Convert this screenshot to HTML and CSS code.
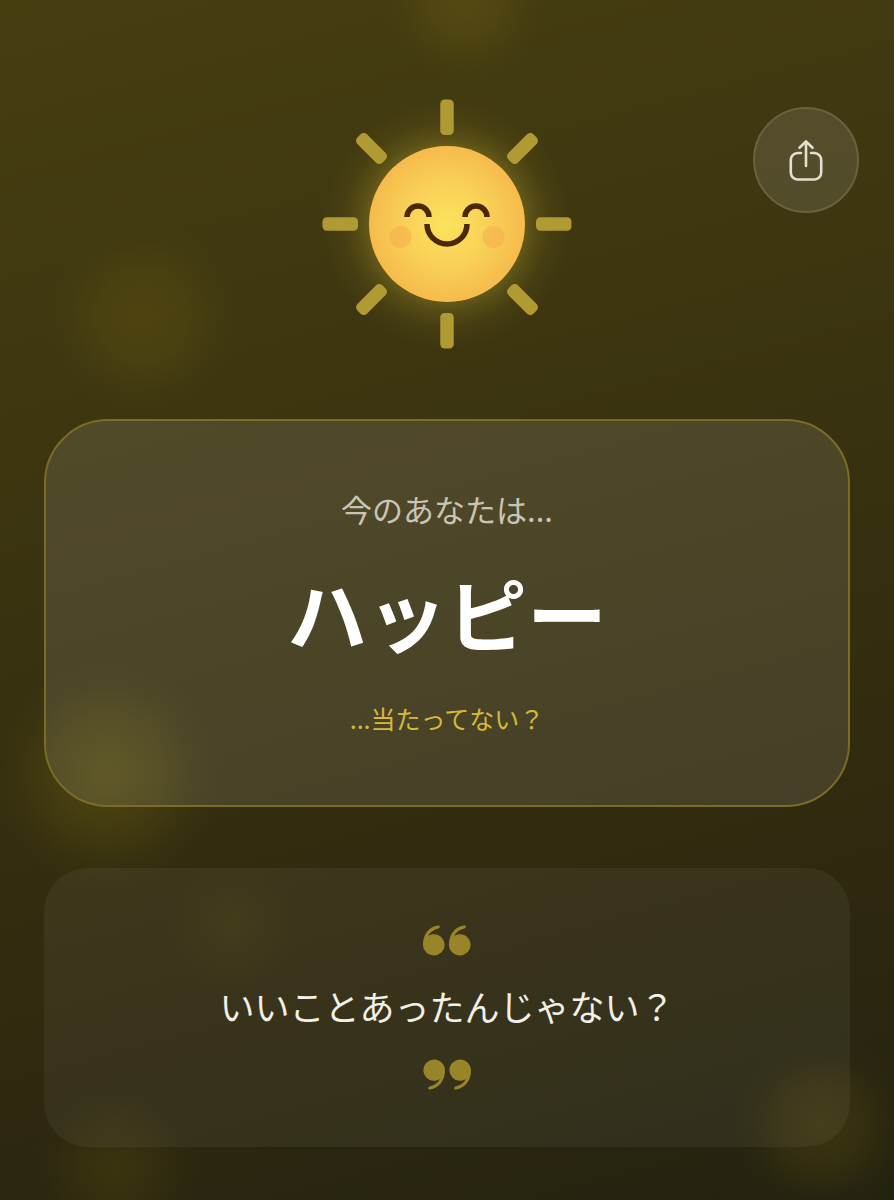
FILE: index.html
```html
<!DOCTYPE html>
<html lang="ja">
<head>
<meta charset="utf-8">
<meta name="viewport" content="width=device-width, initial-scale=1">
<title>今のあなたは</title>
<link rel="stylesheet" href="styles.css">
</head>
<body>
<main class="screen">
  <header class="hero">
    <svg class="sun" viewBox="0 0 250 250" role="img" aria-label="笑顔の太陽">
      <defs>
        <radialGradient id="face">
          <stop offset="0" stop-color="#fbe35c"/>
          <stop offset="0.5" stop-color="#f9d258"/>
          <stop offset="1" stop-color="#f6bb4c"/>
        </radialGradient>
        <radialGradient id="glow">
          <stop offset="0.6" stop-color="#d8c030" stop-opacity="0.28"/>
          <stop offset="0.7" stop-color="#d8c030" stop-opacity="0.15"/>
          <stop offset="0.83" stop-color="#d8c030" stop-opacity="0.05"/>
          <stop offset="1" stop-color="#d8c030" stop-opacity="0"/>
        </radialGradient>
        <rect id="ray" x="118.250" y="0.500" width="13.500" height="35.500" rx="4.500"/>
      </defs>
      <circle cx="125" cy="125" r="125" fill="url(#glow)"/>
      <g fill="#b09a33">
        <use href="#ray"/>
        <use href="#ray" transform="rotate(45 125 125)"/>
        <use href="#ray" transform="rotate(90 125 125)"/>
        <use href="#ray" transform="rotate(135 125 125)"/>
        <use href="#ray" transform="rotate(180 125 125)"/>
        <use href="#ray" transform="rotate(225 125 125)"/>
        <use href="#ray" transform="rotate(270 125 125)"/>
        <use href="#ray" transform="rotate(315 125 125)"/>
      </g>
      <circle cx="125" cy="125" r="78" fill="url(#face)"/>
      <g fill="#f3a94b" fill-opacity="0.5">
        <circle cx="78.500" cy="138" r="11"/>
        <circle cx="171.500" cy="138" r="11"/>
      </g>
      <g fill="none" stroke="#4b2806" stroke-width="5.500">
        <path d="M85 118a11 11 0 0 1 22 0"/>
        <path d="M143 118a11 11 0 0 1 22 0"/>
        <path d="M105 125a20 20 0 0 0 40 0"/>
      </g>
    </svg>
    <button class="share" type="button" aria-label="共有">
      <svg class="share-icon" viewBox="0 0 36 44" aria-hidden="true">
        <path d="M13 15H9.500A7 7 0 0 0 2.800 22V34.500A7 7 0 0 0 9.500 41.500H26.500A7 7 0 0 0 33.200 34.500V22A7 7 0 0 0 26.500 15H23"/>
        <path d="M18 28V4M11.500 9.800L18 3.400L24.500 9.800"/>
      </svg>
    </button>
  </header>

  <section class="card result">
    <p class="lead">今のあなたは...</p>
    <h1 class="mood">ハッピー</h1>
    <p class="hint">...当たってない？</p>
  </section>

  <section class="card message">
    <svg class="mark" viewBox="0 0 48 31" aria-hidden="true">
      <path id="q" d="M11 9.200A10.800 10.600 0 1 1 0 19.500C0 9.500 6 1.800 14.800 .6C17.300 .2 17.600 2.800 15.400 3.400C10.200 4.800 6.500 7.500 5 11.200C6.700 9.800 8.800 9.200 11 9.200Z"/>
      <use href="#q" x="26"/>
    </svg>
    <p class="quote">いいことあったんじゃない？</p>
    <svg class="mark mark-close" viewBox="0 0 48 31" aria-hidden="true">
      <use href="#q"/>
      <use href="#q" x="26"/>
    </svg>
  </section>
</main>
</body>
</html>
```

FILE: styles.css
```css
* {
  box-sizing: border-box;
}

body {
  margin: 0;
  background: #272311;
  color: #fff;
  font-family: "Noto Sans CJK JP", sans-serif;
}

.screen {
  min-height: 100vh;
  padding: 99px 44px 53px;
  background:
    radial-gradient(circle 80px at 52% 0, rgba(112, 98, 20, 0.36), rgba(112, 98, 20, 0.25) 45%, rgba(112, 98, 20, 0.06) 80%, transparent),
    radial-gradient(circle 95px at 16% 318px, rgba(112, 96, 16, 0.3), rgba(112, 96, 16, 0.22) 45%, rgba(112, 96, 16, 0.05) 80%, transparent),
    radial-gradient(circle 115px at 12% 775px, rgba(120, 108, 16, 0.38), rgba(120, 108, 16, 0.24) 42%, rgba(120, 108, 16, 0.06) 78%, transparent),
    radial-gradient(circle 65px at 26% 925px, rgba(96, 90, 16, 0.16), rgba(96, 90, 16, 0.08) 50%, transparent),
    radial-gradient(circle 85px at 13% 1170px, rgba(104, 94, 14, 0.24), rgba(104, 94, 14, 0.14) 45%, rgba(104, 94, 14, 0.03) 80%, transparent),
    radial-gradient(circle 90px at 92% 1125px, rgba(104, 92, 14, 0.3), rgba(104, 92, 14, 0.2) 45%, rgba(104, 92, 14, 0.04) 80%, transparent),
    linear-gradient(165deg, #473e10, #3a3310 42%, #2f290f 75%, #242211);
}

.hero {
  display: grid;
  grid-template-columns: 1fr 250px 1fr;
  align-items: start;
  margin-bottom: 70px;
}

.sun {
  grid-column: 2;
  display: block;
  width: 250px;
  height: 250px;
}

.share {
  justify-self: end;
  display: grid;
  place-items: center;
  width: 106px;
  height: 106px;
  margin: 8px -9px 0 0;
  padding: 0;
  border: 2px solid #69623f;
  border-radius: 50%;
  background: rgba(255, 255, 255, 0.11);
  cursor: pointer;
}

.share-icon {
  width: 36px;
  height: 44px;
  fill: none;
  stroke: #e4e0d0;
  stroke-width: 2.6;
  stroke-linecap: round;
  stroke-linejoin: round;
}

.card {
  display: flex;
  flex-direction: column;
  align-items: center;
  text-align: center;
}

.card p,
.card h1 {
  margin: 0;
}

.result {
  margin-bottom: 61px;
  padding: 64px 40px 68px;
  border: 2px solid #7b6c26;
  border-radius: 64px;
  background: rgba(255, 255, 255, 0.1);
}

.lead {
  color: #c9c5b6;
  font-size: 31px;
  line-height: 48px;
}

.card .mood {
  margin: 22px 0 33px;
  font-size: 80px;
  font-weight: 700;
  line-height: 112px;
}

.hint {
  color: #d8b83a;
  font-size: 25px;
  line-height: 37px;
}

.message {
  padding: 57px 40px;
  border-radius: 44px;
  background: rgba(255, 255, 255, 0.05);
}

.mark {
  display: block;
  width: 48px;
  height: 31px;
  fill: #988529;
}

.mark-close {
  transform: rotate(180deg);
}

.quote {
  padding: 23px 0 27px;
  color: #f1efe8;
  font-size: 35px;
  line-height: 53px;
}
```
